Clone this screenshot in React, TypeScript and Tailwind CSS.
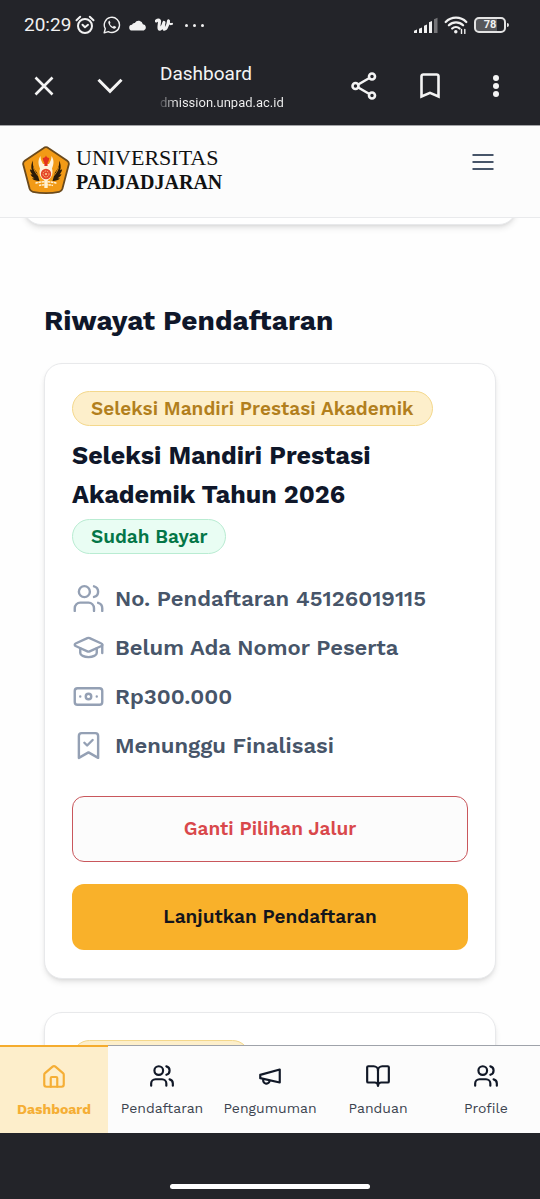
import React, { useState } from 'react';
import {
  Banknote,
  BookmarkCheck,
  BookOpen,
  GraduationCap,
  House,
  Users,
  type LucideIcon,
} from 'lucide-react';
import clsx from 'clsx';

type IconProps = { className?: string };

// --- Status bar ---
function AlarmIcon() {
  return (
    <svg viewBox="0 0 20 20" className="size-5" fill="none" stroke="currentColor" strokeWidth="2" strokeLinecap="round">
      <circle cx="10" cy="11" r="7" />
      <path d="M1.500 5.200 5.200 1.800M18.500 5.200l-3.700-3.400" />
      <path d="m7.500 9.800 2.500 2.400 3-2.400" strokeLinejoin="round" />
    </svg>
  );
}

function WhatsappIcon() {
  return (
    <svg viewBox="0 0 18 18" className="size-[18px]" fill="none" stroke="currentColor" strokeWidth="1.4">
      <path d="M1.2 16.8l1.1-4.1a7.6 7.6 0 1 1 3 2.9z" strokeLinejoin="round" />
      <path
        d="M6.2 4.7c-.9.6-1.1 1.700-.6 3 .9 2.300 2.600 4 4.800 4.800 1.200.4 2.200.1 2.700-.9.200-.5.100-.8-.200-.9l-1.600-.8c-.3-.1-.5 0-.8.4-.4.5-.6.500-1.200.2-1-.5-1.700-1.200-2.300-2.200-.2-.4 0-.6.300-1 .2-.3.200-.4.100-.7l-.7-1.600c-.1-.3-.3-.4-.5-.3z"
        fill="currentColor"
        stroke="none"
      />
    </svg>
  );
}

function CloudIcon() {
  return (
    <svg viewBox="0 0 18 12" className="h-3 w-[18px]" fill="currentColor">
      <path d="M3.200 11.500a2.900 2.900 0 0 1-.2-5.800A2.700 2.700 0 0 1 5.800 3.900 4.400 4.400 0 0 1 13.900 5.300a3.200 3.200 0 0 1 .9 6.200z" />
    </svg>
  );
}

function WattpadIcon() {
  return (
    <svg viewBox="0 0 18 14" className="h-[14px] w-[18px]" fill="none" stroke="currentColor" strokeLinecap="round" strokeLinejoin="round">
      <path d="M1.300 3C2.800 1.800 4.700 1.600 4.600 3.400 4.400 6 3.400 9 4.200 11c.7 1.300 3.300-1.800 4.800-6.600-.6 3-.7 5.500 0 6.600.9 1.200 3.900-2.200 4.500-8" strokeWidth="3" />
      <path d="M13.500 2.500c0 2.900 1.400 4.300 3.500 3.300" strokeWidth="2" />
    </svg>
  );
}

function SignalIcon() {
  return (
    <svg viewBox="0 0 24 16" className="h-4 w-6" fill="currentColor">
      <path d="M0 13.800l3-1.300V16H0zM5 11.800l3-1.300V16H5zM10 8.800l3-1.300V16h-3zM15 5.300 18 4v12h-3z" />
      <path d="M20 2.300 23.500.8V16H20z" opacity=".4" />
    </svg>
  );
}

function WifiIcon() {
  return (
    <svg viewBox="0 0 24 18" className="h-[18px] w-6" fill="none" stroke="currentColor" strokeWidth="2.300" strokeLinecap="round">
      <path d="M1.700 6a14.500 14.500 0 0 1 20.600 0M4.900 9.300a10 10 0 0 1 14.200 0M8.200 12.500a5.400 5.400 0 0 1 7.400 0" />
      <circle cx="11.800" cy="15.800" r="1" fill="currentColor" strokeWidth="1.500" />
      <path d="M17.500 13.500v4M20.800 13.500v4" strokeWidth="1.400" />
    </svg>
  );
}

function StatusBar() {
  return (
    <div className="flex h-[50px] items-center justify-between pl-6 pr-[31px] text-[#f1f1f1]">
      <div className="flex items-center gap-2">
        <div className="flex items-center gap-1">
          <span className="text-[19px]">20:29</span>
          <AlarmIcon />
        </div>
        <WhatsappIcon />
        <CloudIcon />
        <WattpadIcon />
        <span className="flex gap-[5px] pl-1">
          <i className="size-[3px] rounded-full bg-current" />
          <i className="size-[3px] rounded-full bg-current" />
          <i className="size-[3px] rounded-full bg-current" />
        </span>
      </div>
      <div className="flex items-center gap-[6px]">
        <SignalIcon />
        <WifiIcon />
        <div className="flex items-center gap-px">
          <div className="flex h-4 w-8 items-center justify-center rounded-[5px] border-2 border-[#e3e3e3] bg-linear-to-r from-[#56575b] from-75% to-[#232429] to-75% text-[11px] font-bold">
            78
          </div>
          <i className="h-1 w-[2px] rounded-r bg-[#e3e3e3]" />
        </div>
      </div>
    </div>
  );
}

// --- Browser bar ---
function BrowserBar() {
  return (
    <div className="flex h-[75px] items-start justify-between pl-8 pr-[31px] pt-3 text-[#f4f4f4]">
      <div className="flex items-center">
        <button aria-label="Tutup" className="flex size-6 items-center justify-center">
          <svg viewBox="0 0 20 20" className="size-5" fill="none" stroke="currentColor" strokeWidth="2.600">
            <path d="m1.500 1.500 17 17M18.500 1.500l-17 17" />
          </svg>
        </button>
        <button aria-label="Perkecil" className="ml-10 flex h-6 w-7 items-center justify-center">
          <svg viewBox="0 0 26 16" className="h-4 w-[26px]" fill="none" stroke="currentColor" strokeWidth="3">
            <path d="m1.500 1.800 11.500 11.500L24.500 1.800" />
          </svg>
        </button>
        <div className="ml-9 leading-none">
          <div className="text-[19px] leading-6">Dashboard</div>
          <div className="flex h-6 items-center pt-2 text-[13px]">
            <span className="bg-linear-to-r from-[#4a4b50] to-[#f4f4f4] to-[16px] bg-clip-text text-transparent">
              dmission.unpad.ac.id
            </span>
          </div>
        </div>
      </div>
      <div className="flex h-12 items-center gap-10">
        <button aria-label="Bagikan">
          <svg viewBox="0 0 26 28" className="h-7 w-[26px]" fill="none" stroke="currentColor" strokeWidth="2.600">
            <circle cx="4.500" cy="14" r="3" />
            <circle cx="21" cy="4.500" r="3" />
            <circle cx="21" cy="23.500" r="3" />
            <path d="m7.200 12.500 11.200-6.500M7.200 15.500l11.200 6.500" />
          </svg>
        </button>
        <button aria-label="Simpan" className="flex w-[26px] justify-center">
          <svg viewBox="0 0 20 26" className="h-[26px] w-5" fill="none" stroke="currentColor" strokeWidth="2.600">
            <path d="M1.500 23.500V3.300a1.800 1.800 0 0 1 1.800-1.800h13.400a1.800 1.800 0 0 1 1.800 1.800v20.200L10 19.800z" />
          </svg>
        </button>
        <button aria-label="Menu browser" className="flex w-[26px] flex-col items-center gap-[2px]">
          <i className="size-[6px] rounded-full bg-current" />
          <i className="size-[6px] rounded-full bg-current" />
          <i className="size-[6px] rounded-full bg-current" />
        </button>
      </div>
    </div>
  );
}

// --- Site header ---
function Crest() {
  return (
    <svg viewBox="0 0 48 48" className="size-12">
      <path
        d="M24 1.200c1 0 1.800.4 2.600 1l18.600 12.600c1.500 1.100 2 2.300 1.500 4l-6.300 24c-.5 1.700-1.500 2.700-3.200 3-8.600 1.600-17.800 1.600-26.400 0-1.700-.3-2.700-1.300-3.200-3l-6.300-24c-.5-1.700 0-2.900 1.500-4L21.400 2.200c.8-.6 1.600-1 2.600-1z"
        fill="#f29a16"
        stroke="#6b4a1c"
        strokeWidth="1.800"
      />
      <g fill="#2a1a08">
        <path d="M11 14.500c-.8 5 1.300 9 4 12l2.500 8.500c-3.500-.2-6-1-7.500-2.600l2.500-.2c-2-1-3.300-2.300-4-4l2 .3c-1.500-1.500-2.400-3.200-2.600-5.200l1.900 1c-.9-3.300-.6-6.800 1.200-9.800z" />
        <path d="M37 14.500c.8 5-1.300 9-4 12L30.500 35c3.500-.2 6-1 7.500-2.600l-2.500-.2c2-1 3.300-2.300 4-4l-2 .3c1.500-1.500 2.400-3.200 2.600-5.200l-1.900 1c.9-3.300.6-6.800-1.200-9.800z" />
      </g>
      <path d="M11.500 21.500c1 3.500 2.500 6 5 8.500M36.500 21.500c-1 3.500-2.500 6-5 8.500" fill="none" stroke="#f29a16" strokeWidth=".9" />
      <path d="M18.500 10c-2.700 4-2.500 8-.5 12.500-1.500 5.500.5 10.500 6 12.500 5.500-2 7.500-7 6-12.500 2-4.500 2.200-8.500-.5-12.500 0 3-1 5.500-2.500 8h-6c-1.500-2.500-2.500-5-2.500-8z" fill="#fff3dc" />
      <path d="M24 9.500c.6 1.600 1.200 2.300 3.300 2.500-.3 1.900-.7 3.300-1.300 4.300-.6 1.100-.4 2.200-.4 3.700h-3.200c0-1.500.2-2.600-.4-3.700-.6-1-1-2.400-1.300-4.300 2.100-.2 2.700-.9 3.300-2.500z" fill="#e3311d" />
      <circle cx="24" cy="28" r="5.200" fill="#e4452a" />
      <circle cx="24" cy="28" r="3" fill="none" stroke="#ffc27a" strokeDasharray="1.500 1" />
      <circle cx="24" cy="28" r="1" fill="#ffd9a0" />
      <path d="M13.500 37.200c6.500-2 14.500-2 21 0M17 39.500c4-1.200 10-1.200 14 0" fill="none" stroke="#fff1d2" strokeWidth="1.500" strokeDasharray="2.500 .6" />
      <path d="M22.300 34h3.400v8h-3.400z" fill="#fff1d2" />
    </svg>
  );
}

function SiteHeader() {
  return (
    <header className="flex h-[93px] shrink-0 items-start justify-between border-b border-t border-b-[#e9eaec] border-t-[#a3a4a7] bg-[#fcfcfc] pl-[22px] pr-[46px] pt-5">
      <a href="#beranda" className="flex items-center gap-[6px] text-[#111]">
        <Crest />
        <span className="flex flex-col font-['Liberation_Serif',serif]">
          <span className="text-[22px] leading-6">UNIVERSITAS</span>
          <span className="text-[20px] font-bold leading-6">PADJADJARAN</span>
        </span>
      </a>
      <button aria-label="Buka menu" className="mt-[7px] text-[#475569]">
        <svg viewBox="0 0 22 18" className="h-[18px] w-[22px]" stroke="currentColor" strokeWidth="2">
          <path d="M.5 2h21M.5 9h21M.5 16h21" />
        </svg>
      </button>
    </header>
  );
}

// --- Content ---
const details: { icon: LucideIcon; text: string }[] = [
  { icon: Users, text: 'No. Pendaftaran 45126019115' },
  { icon: GraduationCap, text: 'Belum Ada Nomor Peserta' },
  { icon: Banknote, text: 'Rp300.000' },
  { icon: BookmarkCheck, text: 'Menunggu Finalisasi' },
];

function RegistrationCard() {
  return (
    <article className="rounded-[18px] border border-[#e8e9eb] bg-white p-[27px] pb-7 shadow-md">
      <span className="inline-flex h-[35px] items-center rounded-full border border-[#f4d88c] bg-[#fdefcb] px-[18px] pt-px align-top text-[19px] font-semibold text-[#b27f1d]">
        Seleksi Mandiri Prestasi Akademik
      </span>
      <h3 className="mt-[10px] max-w-[340px] text-[25px] font-bold leading-[39px] text-[#0f172a]">
        Seleksi Mandiri Prestasi Akademik Tahun 2026
      </h3>
      <span className="mt-[5px] inline-flex h-[35px] items-center rounded-full border border-[#b9ecd2] bg-[#e9fdf3] px-[18px] pt-px align-top text-[19px] font-semibold text-[#047647]">
        Sudah Bayar
      </span>
      <ul className="mt-7 flex flex-col gap-4">
        {details.map(({ icon: Icon, text }) => (
          <li key={text} className="flex h-[33px] items-center gap-[10px] text-[22px] font-semibold text-[#475569]">
            <Icon size={33} strokeWidth={1.75} className="shrink-0 text-[#94a0b4]" />
            {text}
          </li>
        ))}
      </ul>
      <div className="mt-[34px] flex flex-col gap-[22px]">
        <button className="h-[66px] rounded-xl border border-[#c9575c] bg-[#fcfcfc] text-[19px] font-semibold text-[#d9484b]">
          Ganti Pilihan Jalur
        </button>
        <button className="h-[66px] rounded-xl bg-[#f9b12a] text-[19px] font-semibold text-[#14151c]">
          Lanjutkan Pendaftaran
        </button>
      </div>
    </article>
  );
}

// --- Bottom navigation ---
function MegaphoneIcon({ className }: IconProps) {
  return (
    <svg viewBox="0 0 24 24" className={className} fill="none" stroke="currentColor" strokeWidth="2" strokeLinecap="round" strokeLinejoin="round">
      <path d="m3 11 18-5v12L3 14v-3z" />
      <path d="M11.600 16.800a3 3 0 1 1-5.800-1.600" />
    </svg>
  );
}

const tabs = [
  { label: 'Dashboard', icon: House },
  { label: 'Pendaftaran', icon: Users },
  { label: 'Pengumuman', icon: MegaphoneIcon },
  { label: 'Panduan', icon: BookOpen },
  { label: 'Profile', icon: Users },
];

function BottomNav() {
  const [active, setActive] = useState('Dashboard');

  return (
    <nav className="grid h-[88px] shrink-0 grid-cols-5 bg-[#fcfcfc]">
      {tabs.map(({ label, icon: Icon }) => (
        <button
          key={label}
          onClick={() => setActive(label)}
          className={clsx(
            'flex flex-col items-center gap-2 text-[14px] leading-[22px]',
            active === label
              ? 'border-t-2 border-[#f5ac2e] bg-[#fdeecb] pt-[17px] font-bold text-[#f5ae35]'
              : 'border-t border-[#9fa3aa] pt-[17px] text-[#3c4450]'
          )}
        >
          <Icon className={clsx('size-[26px]', active !== label && 'text-[#111827]')} />
          {label}
        </button>
      ))}
    </nav>
  );
}

export default function App() {
  return (
    <div className="flex h-screen flex-col bg-white font-['Work_Sans',Inter,sans-serif]">
      <div className="shrink-0 bg-[#232429] font-[Roboto,sans-serif]">
        <StatusBar />
        <BrowserBar />
      </div>
      <SiteHeader />
      <main className="min-h-0 flex-1 overflow-y-auto bg-[#fefefe] [scrollbar-width:none]">
        <div className="mx-[23px] -mt-8 h-[39px] rounded-b-[18px] border border-[#e8e9eb] bg-white shadow-md" />
        <section className="px-11 pt-[76px]">
          <h2 className="text-[28px] font-bold leading-10 text-[#0f172a]">Riwayat Pendaftaran</h2>
          <div className="mt-[22px] flex flex-col gap-[33px]">
            <RegistrationCard />
            <article className="rounded-[18px] border border-[#e8e9eb] bg-white p-[27px] shadow-md">
              <div className="h-[35px] w-[178px] rounded-full border border-[#f4d88c] bg-[#fdefcb]" />
            </article>
          </div>
        </section>
      </main>
      <BottomNav />
      <footer className="flex h-[66px] shrink-0 items-end justify-center bg-[#232429] pb-[10px]">
        <div className="h-[5px] w-[200px] rounded-full bg-white" />
      </footer>
    </div>
  );
}
